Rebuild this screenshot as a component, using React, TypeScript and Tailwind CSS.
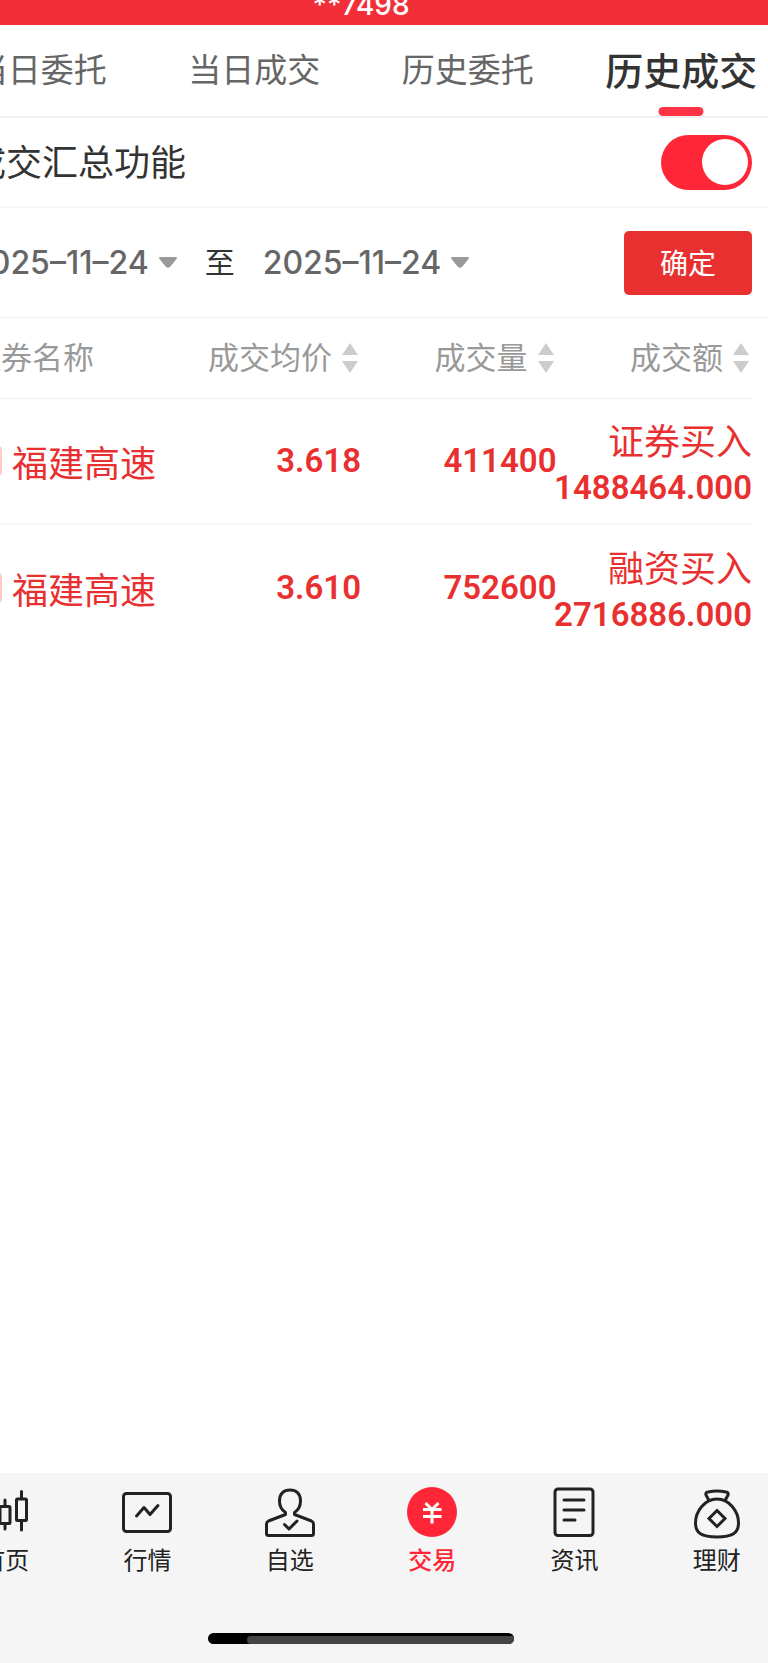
import { useState, type ReactNode } from "react";

type Trade = {
  name: string;
  price: string;
  volume: string;
  side: string;
  amount: string;
};

const tabs = ["当日委托", "当日成交", "历史委托", "历史成交"];

const columns = ["成交均价", "成交量", "成交额"];

const trades: Trade[] = [
  { name: "福建高速", price: "3.618", volume: "411400", side: "证券买入", amount: "1488464.000" },
  { name: "福建高速", price: "3.610", volume: "752600", side: "融资买入", amount: "2716886.000" },
];

function LineIcon({ children }: { children: ReactNode }) {
  return (
    <svg
      viewBox="0 0 50 50"
      className="size-[50px] overflow-visible"
      fill="none"
      stroke="currentColor"
      strokeWidth="3"
      strokeLinecap="round"
      strokeLinejoin="round"
      aria-hidden="true"
    >
      {children}
    </svg>
  );
}

const navItems = [
  {
    label: "首页",
    icon: (
      <LineIcon>
        <rect x="3" y="14" width="9" height="20" rx="1" />
        <path d="M7.5 8v6M7.5 34v6" />
        <rect x="20" y="19.5" width="10" height="17" rx="1" />
        <path d="M25 13v6M25 37v5" />
        <rect x="36.5" y="12" width="10" height="21.5" rx="1" />
        <path d="M41.5 4.5v7M41.5 34v9" />
      </LineIcon>
    ),
  },
  {
    label: "行情",
    icon: (
      <LineIcon>
        <rect x="1.5" y="6.5" width="47" height="38" rx="3" />
        <path d="M14.5 29l7.5-8.5 6 7 8-9" />
      </LineIcon>
    ),
  },
  {
    label: "自选",
    icon: (
      <LineIcon>
        <path d="M20.5 27.5v-2c-4-2.5-6-6.5-6-11.5C14.5 7 18.5 3 25 3s10.5 4 10.5 11c0 5-2 9-6 11.5v2l17 6.5q2 1 2 3v9.5q0 2-2 2h-43q-2 0-2-2V37q0-2 2-3z" />
        <path d="M19.5 37.5l4.5 4.5 8-8" />
      </LineIcon>
    ),
  },
  {
    label: "交易",
    active: true,
    icon: (
      <svg viewBox="0 0 50 50" className="size-[50px]" fill="none" aria-hidden="true">
        <circle cx="25" cy="25" r="25" fill="#ff2637" />
        <path d="M18.5 16l6.5 6.5 6.5-6.5M16 22.500h18.5M16 29.500h18.5M25 22.500v14" stroke="#fff" strokeWidth="3" />
      </svg>
    ),
  },
  {
    label: "资讯",
    icon: (
      <LineIcon>
        <rect x="6" y="2" width="38" height="46.5" rx="3" />
        <path d="M15 13h20M15 23h20M15 33h11" />
      </LineIcon>
    ),
  },
  {
    label: "理财",
    icon: (
      <LineIcon>
        <path d="M17 13.5l-3-5.5q-1-2.5 2-3 9-2 18 0 3 .5 2 3l-3 5.5" />
        <path d="M25 12C13 12 3.500 24 3.500 36c0 10 6 14 21.500 14s21.500-4 21.500-14C46.500 24 37 12 25 12z" />
        <path d="M25 23.5l8 8-8 8-8-8z" strokeLinejoin="miter" />
      </LineIcon>
    ),
  },
];

function DateButton({ value, label }: { value: string; label: string }) {
  return (
    <button
      type="button"
      aria-label={label}
      className="flex items-center gap-2.5 font-['Inter',sans-serif] text-[32px] font-medium leading-10 text-[#666]"
    >
      <span>{value}</span>
      <svg viewBox="0 0 18 11" className="h-[11px] w-[18px]" fill="#999" aria-hidden="true">
        <path d="M1 0h16q1.500.5.5 2L11 10q-2 1.500-4 0L.5 2Q-.5.5 1 0z" />
      </svg>
    </button>
  );
}

function SortArrows() {
  return (
    <svg viewBox="0 0 16 30" className="mt-1 h-[30px] w-4" fill="#ccc" aria-hidden="true">
      <path d="M8 0l8 12H0zM8 30l8-12H0z" />
    </svg>
  );
}

export default function App() {
  const [activeTab, setActiveTab] = useState("历史成交");
  const [summary, setSummary] = useState(true);

  return (
    <div className="overflow-hidden bg-white font-['Noto_Sans_CJK_SC',sans-serif]">
      {/* the phone page is wider than the viewport and runs off both sides */}
      <div className="-ml-[66px] -mr-5 flex min-h-screen flex-col">
        <header className="flex h-[25px] items-end justify-center overflow-hidden bg-[#f22f38]">
          <p className="font-['Inter',sans-serif] text-[28px] font-medium leading-10 text-white">**7498</p>
        </header>

        <nav className="grid h-[93px] grid-cols-4 border-b-2 border-[#f0f0f0]">
          {tabs.map((tab) => (
            <button
              key={tab}
              type="button"
              onClick={() => setActiveTab(tab)}
              className={
                tab === activeTab
                  ? "relative whitespace-nowrap pb-1 text-[38px] font-medium text-[#333]"
                  : "relative whitespace-nowrap pb-1 text-[33px] text-[#666]"
              }
            >
              {tab}
              {tab === activeTab && (
                <span className="absolute bottom-0 left-1/2 h-[9px] w-[45px] -translate-x-1/2 rounded-full bg-[#ff3346]" />
              )}
            </button>
          ))}
        </nav>

        <div className="flex h-[90px] items-center justify-between border-b-2 border-[#f7f7f7] px-9">
          <label htmlFor="summary" className="pb-1 text-[36px] text-[#333]">
            成交汇总功能
          </label>
          <input
            id="summary"
            type="checkbox"
            role="switch"
            checked={summary}
            onChange={(e) => setSummary(e.target.checked)}
            className="flex h-[55px] w-[91px] appearance-none items-center rounded-full bg-[#ccc] px-1 before:size-[46px] before:rounded-full before:bg-white checked:justify-end checked:bg-[#ff2637]"
          />
        </div>

        <div className="flex h-[110px] items-center border-b border-[#f0f0f0] px-9">
          <DateButton value="2025–11–24" label="开始日期" />
          <span className="mx-7 pb-1 text-[30px] text-[#333]">至</span>
          <DateButton value="2025–11–24" label="结束日期" />
          <button type="button" className="ml-auto h-16 w-32 rounded-[5px] bg-[#e93030] pb-0.5 text-[28px] text-white">
            确定
          </button>
        </div>

        <div className="px-9">
          <table className="w-full table-fixed border-collapse whitespace-nowrap">
            <thead>
              <tr className="h-20 border-b border-[#f0f0f0] text-[31px] text-[#999]">
                <th className="p-0 pb-1 text-left font-normal">证券名称</th>
                {columns.map((column) => (
                  <th key={column} className="p-0 pb-1 font-normal">
                    <button type="button" className="ml-auto flex items-center gap-2.5 pr-[3px]">
                      {column}
                      <SortArrows />
                    </button>
                  </th>
                ))}
              </tr>
            </thead>
            <tbody className="text-[#e93030]">
              {trades.map((trade) => (
                <tr key={trade.side} className="h-[126px] border-b-2 border-[#f7f7f7] last:border-b-0">
                  <td className="p-0">
                    <div className="flex items-center gap-2.5 text-[36px]">
                      <span className="h-[30px] w-8 shrink-0 rounded-sm border-2 border-[#ffcaca]" />
                      {trade.name}
                    </div>
                  </td>
                  <td className="p-0 text-right font-['Roboto',sans-serif] text-[33px] font-semibold">{trade.price}</td>
                  <td className="p-0 text-right font-['Roboto',sans-serif] text-[33px] font-semibold">{trade.volume}</td>
                  <td className="p-0">
                    <div className="flex flex-col items-end pt-1.5">
                      <span className="text-[36px] leading-[48px]">{trade.side}</span>
                      <span className="font-['Roboto',sans-serif] text-[33px] font-semibold leading-[50px]">
                        {trade.amount}
                      </span>
                    </div>
                  </td>
                </tr>
              ))}
            </tbody>
          </table>
        </div>

        <footer className="mt-auto flex flex-col items-center bg-[#f5f5f5] pb-[19px] pt-3.5">
          <nav className="grid w-full grid-cols-6">
            {navItems.map((item) => (
              <a
                key={item.label}
                href="#"
                className={
                  item.active
                    ? "flex flex-col items-center gap-1 text-[24px] font-medium leading-9 text-[#ff2637]"
                    : "flex flex-col items-center gap-1 text-[24px] leading-9 text-[#222]"
                }
              >
                {item.icon}
                <span>{item.label}</span>
              </a>
            ))}
          </nav>
          {/* home indicator */}
          <div className="mt-14 flex h-[11px] w-[306px] items-end overflow-hidden rounded-full bg-black pl-[39px]">
            <div className="h-2 w-full rounded-l-full bg-[#444]" />
          </div>
        </footer>
      </div>
    </div>
  );
}
